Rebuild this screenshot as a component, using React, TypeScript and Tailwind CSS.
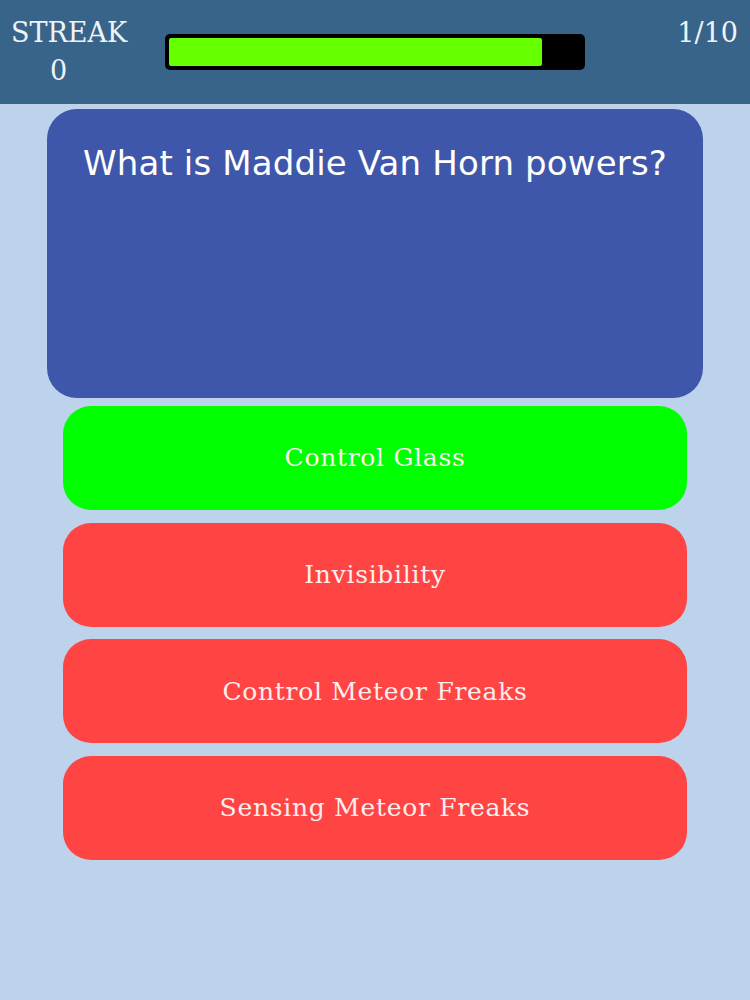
import React from 'react';

const answers = [
  { label: 'Control Glass', correct: true },
  { label: 'Invisibility', correct: false },
  { label: 'Control Meteor Freaks', correct: false },
  { label: 'Sensing Meteor Freaks', correct: false },
];

export default function App() {
  const progress = 0.905;

  return (
    <div className="min-h-screen w-[750px] bg-[#bdd3ec]">
      {/* Header */}
      <div className="h-[104px] bg-[#386489] flex items-start text-[#eef3f8] font-['DejaVu_Serif',serif]">
        <div className="w-[138px] pl-[11px] pt-[14px] flex flex-col items-start leading-[38px] text-[27px]">
          <span>STREAK</span>
          <span className="ml-[39px]">0</span>
        </div>
        <div className="ml-[27px] mt-[34px] w-[420px] h-[36px] bg-black rounded-[5px] p-[4px]">
          <div className="h-full bg-[#66ff00] rounded-[2px]" style={{ width: `${progress * 100}%` }} />
        </div>
        <div className="ml-auto pr-[12px] pt-[14px] text-[27px] leading-[38px]">1/10</div>
      </div>

      {/* Question card */}
      <div className="mx-[47px] mt-[5px] h-[289px] rounded-[30px] bg-[#3f57aa] pt-[34px] text-center">
        <p className="text-white text-[34px] leading-[40px] tracking-[0.15px] font-['DejaVu_Sans',sans-serif]">
          What is Maddie Van Horn powers?
        </p>
      </div>

      {/* Answers */}
      <div className="mx-[63px] mt-[8px] flex flex-col gap-[12.7px]">
        {answers.map((a) => (
          <button
            key={a.label}
            className={`h-[104px] rounded-[28px] flex items-center justify-center text-[25px] tracking-[0.7px] text-[#fbeeee] font-['DejaVu_Serif',serif] ${
              a.correct ? 'bg-[#00ff00]' : 'bg-[#ff4444]'
            }`}
          >
            {a.label}
          </button>
        ))}
      </div>
    </div>
  );
}
